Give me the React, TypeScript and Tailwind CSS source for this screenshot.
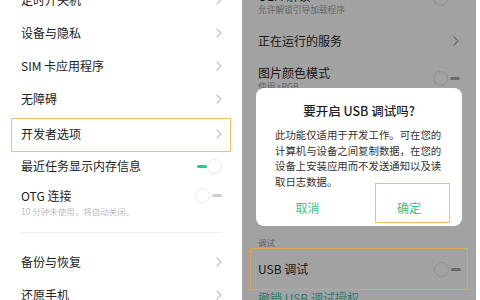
import React from "react";

const FONT = { fontFamily: '"Noto Sans CJK SC", "Noto Sans", sans-serif' };

function Chevron({ color = "#c4c4c4" }: { color?: string }) {
  return (
    <svg width="6" height="10" viewBox="0 0 6 10" fill="none">
      <polyline points="1,1 5,5 1,9" stroke={color} strokeWidth="1.2" strokeLinecap="round" strokeLinejoin="round" />
    </svg>
  );
}

// ColorOS style switch: knob ring + short track
function Toggle({ on = false, dim = false }: { on?: boolean; dim?: boolean }) {
  const ring = dim ? "border-[#939393] bg-[#a2a2a2]" : "border-[#ececec] bg-white";
  const bar = dim ? "bg-[#6c6c6c]" : "bg-[#cfcfcf]";
  if (on) {
    return (
      <div className="flex items-center">
        <div className="h-[3px] w-[10px] rounded-full bg-[#2fc98b]" />
        <div className={`h-[15px] w-[15px] rounded-full border ${ring} shadow-[0_1px_2px_rgba(0,0,0,0.06)]`} />
      </div>
    );
  }
  return (
    <div className="flex items-center">
      <div className={`h-[15px] w-[15px] rounded-full border ${ring}`} />
      <div className={`ml-[2px] h-[3px] w-[10px] rounded-full ${bar}`} />
    </div>
  );
}

function Row({ label, className, right }: { label: string; className: string; right?: React.ReactNode }) {
  return (
    <div className={`flex items-center justify-between pl-[21px] pr-[20px] ${className}`}>
      <span className="text-[12px] leading-[16px] text-[#222]">{label}</span>
      {right ?? <Chevron />}
    </div>
  );
}

function LeftPanel() {
  return (
    <div className="w-[242px] shrink-0 overflow-hidden bg-white">
      <div className="mt-[-17px]">
        <Row label="定时开关机" className="h-[33px]" />
        <Row label="设备与隐私" className="h-[33px]" />
        <Row label="SIM 卡应用程序" className="h-[33px]" />
        <Row label="无障碍" className="h-[33px]" />
        <div className="h-[37px] px-[11px] pt-[3px]">
          <div className="flex h-[34px] items-center justify-between border-[1.5px] border-[#f2c062] pl-[9px] pr-[8px] pb-[3px]">
            <span className="text-[12px] leading-[16px] text-[#222]">开发者选项</span>
            <Chevron />
          </div>
        </div>
        <Row label="最近任务显示内存信息" className="h-[28px]" right={<Toggle on />} />
        <div className="flex h-[45px] items-center justify-between pl-[21px] pr-[20px]">
          <div className="flex flex-col">
            <span className="text-[12px] leading-[16px] text-[#222]">OTG 连接</span>
            <span className="text-[8.5px] leading-[14px] text-[#bdbdbd]">10 分钟未使用，将自动关闭。</span>
          </div>
          <div className="mt-[-14px]">
            <Toggle />
          </div>
        </div>
        <div className="ml-[21px] mr-[20px] mt-[7px] h-px bg-[#efefef]" />
        <div className="h-[12px]" />
        <Row label="备份与恢复" className="h-[33px]" />
        <Row label="还原手机" className="h-[33px]" />
      </div>
    </div>
  );
}

function Dialog() {
  return (
    <div className="absolute left-[14px] top-[88px] flex h-[138px] w-[206px] flex-col rounded-[8px] bg-white">
      <div className="pt-[14px] text-center text-[12.5px] font-medium leading-[18px] text-[#1e1e1e]">
        要开启 USB 调试吗?
      </div>
      <div className="mt-[7px] whitespace-nowrap pl-[19px] text-[10.4px] leading-[15.5px] text-[#333]">
        此功能仅适用于开发工作。可在您的
        <br />
        计算机与设备之间复制数据，在您的
        <br />
        设备上安装应用而不发送通知以及读
        <br />
        取日志数据。
      </div>
      <div className="grid flex-1 grid-cols-2 items-center text-center text-[12px] text-[#3ebd86]">
        <span>取消</span>
        <span className="pr-[3px]">确定</span>
      </div>
      <div className="absolute left-[119px] top-[95px] h-[40px] w-[75px] border-[1.5px] border-[#f2c062]" />
    </div>
  );
}

function RightPanel() {
  return (
    <div className="relative w-[234px] shrink-0 overflow-hidden bg-[#a2a2a2]">
      <div className="mt-[-20px] flex h-[40px] items-start justify-between pl-[16px] pr-[16px] pt-[8px]">
        <div className="flex flex-col">
          <span className="text-[12px] leading-[16px] text-[#161616]">OEM 解锁</span>
          <span className="text-[8.7px] leading-[12px] text-[#666]">允许解锁引导加载程序</span>
        </div>
        <div className="mt-[3px]">
          <Toggle dim />
        </div>
      </div>
      <div className="flex h-[42px] items-center justify-between pl-[16px] pr-[17px]">
        <span className="text-[12px] leading-[16px] text-[#161616]">正在运行的服务</span>
        <Chevron color="#6e6e6e" />
      </div>
      <div className="flex h-[31px] items-start justify-between pl-[16px] pr-[16px] pt-[3px]">
        <div className="flex flex-col">
          <span className="text-[12px] leading-[16px] text-[#161616]">图片颜色模式</span>
          <span className="text-[8.7px] leading-[12px] text-[#666]">使用 sRGB</span>
        </div>
        <div className="mt-[6px]">
          <Toggle dim />
        </div>
      </div>
      <div className="h-[143px]" />
      <div className="pl-[16px] text-[8.5px] leading-[12px] text-[#5e5e5e]">调试</div>
      <div className="mx-[8px] flex h-[42px] items-center justify-between border-[1.5px] border-[#dba457] pl-[7px] pr-[6px]">
        <span className="text-[12px] leading-[16px] text-[#161616]">USB 调试</span>
        <Toggle dim />
      </div>
      <div className="pl-[16px] text-[12px] leading-[16px] text-[#2f7a68]">撤销 USB 调试授权</div>
      <Dialog />
    </div>
  );
}

export default function App() {
  return (
    <div className="flex h-[300px] w-[480px] overflow-hidden bg-white" style={FONT}>
      <LeftPanel />
      <RightPanel />
      <div className="w-[4px] bg-white" />
    </div>
  );
}
